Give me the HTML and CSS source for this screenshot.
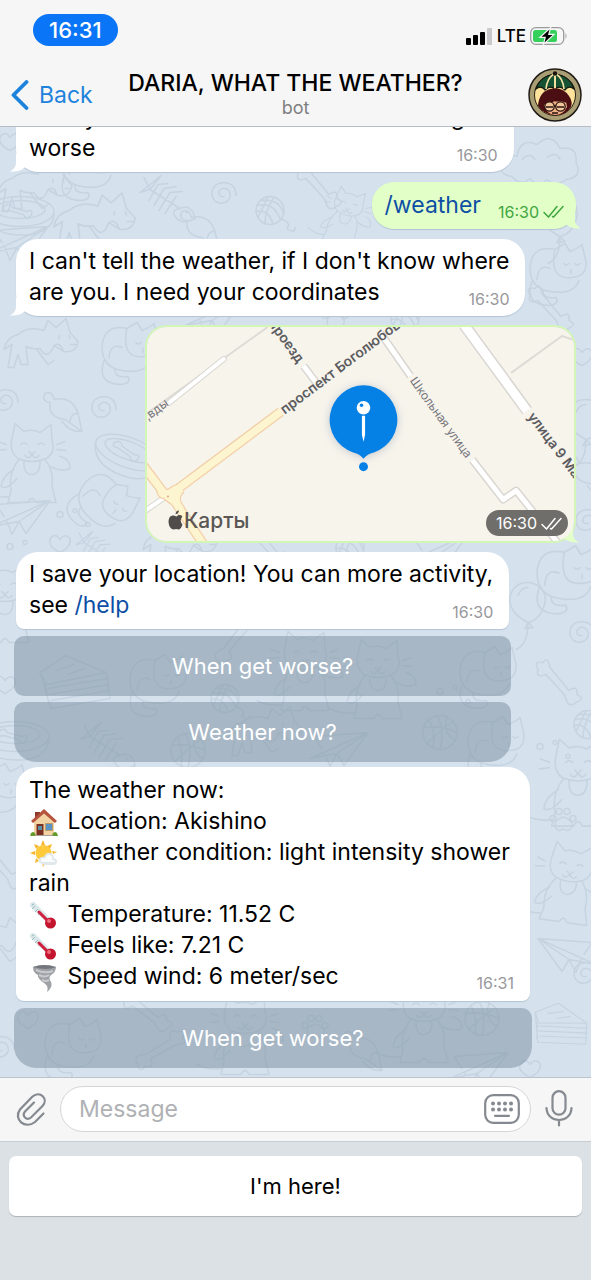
FILE: index.html
```html
<!DOCTYPE html>
<html lang="en">
<head>
<meta charset="utf-8">
<meta name="viewport" content="width=device-width, initial-scale=1">
<title>DARIA, WHAT THE WEATHER?</title>
<link rel="stylesheet" href="styles.css">
</head>
<body>
<svg class="defs" width="0" height="0" aria-hidden="true">
  <symbol id="tail-in" viewBox="0 0 20 18"><path d="M7 0V9C7 13 4 16 1 17.500C7 18 12 17 16 13L20 10V0Z"/></symbol>
  <symbol id="tail-out" viewBox="0 0 20 18"><path d="M13 0V9C13 13 16 16 19 17.500C13 18 8 17 4 13L0 10V0Z"/></symbol>
  <symbol id="checks" viewBox="0 0 21 13"><path d="M1 7.500L5.500 12L14 1.500M9.500 11.500L10.500 12L20 1.500" fill="none" stroke="currentColor" stroke-width="1.500" stroke-linecap="round" stroke-linejoin="round"/></symbol>
  <symbol id="thermometer" viewBox="0 0 28 28">
    <path d="M3 3L16 16" stroke="#dbe7ea" stroke-width="6" stroke-linecap="round"/>
    <path d="M2 7L5 4M5 10L8 7M8 13L11 10M2 3L4 2" stroke="#9bbcbc" stroke-width="1"/>
    <path d="M9 10L19 20" stroke="#cf1f3d" stroke-width="3" stroke-linecap="round"/>
    <circle cx="20.500" cy="21" r="5.500" fill="#c4152f"/><circle cx="19" cy="19" r="2" fill="#ef6b7c"/>
  </symbol>
  <g id="d-cat"><path d="M-20-28L-17-43L-8-35Q0-38 8-34L19-42L20-26Q24-14 14-8Q0-2-14-8Q-23-14-20-28ZM-11-22q3-3 6 0M6-22q3-3 6 0M-3-15L0-12L3-15M0-12q-4 6-7 1M0-12q4 6 7 1M-26-22l-8-3M-26-17l-9 1M25-22l8-3M25-17l9 1M-13-7Q-24 6-21 24L-24 36H-4Q0 28 4 36H24L20 20Q22 4 13-7M-8-6Q-9 8 0 8Q9 7 8-6M-18 3Q-30 10-31 20Q-25 24-15 12M18 0Q30 6 38 2Q38-8 28-10M-23 30Q-38 32-48 26"/></g>
  <g id="d-curl"><path d="M-5-22Q-28-27-30-4Q-30 17-10 20Q14 24 19 9M-5-22L5-28L10-20Q18-23 22-27L26-10Q27 5 12 6Q-4 8-6-6Q-7-15-5-22M4-8q2 3 5 0M15-8q2 3 5 0M11-2v4M-23 8Q-22-8-10-3M-28 10Q-36 34-10 34Q0 32-4 26Q-18 28-17 18"/></g>
  <g id="d-dog"><path d="M-28-10Q-18-19-2-14L2-24L10-17L20-26L24-12L32-3Q30 9 18 7L8 1Q2 17-6 4Q-15 5-20 2L-18 20H-25L-28 10L-32 23H-38L-34 0L-42 5Q-40-7-28-10ZM13-9v3M23-9l1 3M25 0h5M8 1q6-4 9 5M-10 4L2 20L8 16"/></g>
  <g id="d-fish"><path d="M-26-17L-20-5L-30-2Q-18-11-9-19L-20-5L10 14Q22 9 25 24Q10 32 4 20Q2 15 10 14M-12-10L-21 6M-6-6L-16 11M0-2L-11 16M6 2L-5 19M-12-10L-2-11M-6-6L6-8M0-2L12-3M16 18h2"/></g>
  <g id="d-bone"><path d="M-14-8Q-25-4-22-13Q-27-22-17-20Q-12-27-10-15L9 8Q18 2 17 12Q26 16 16 20Q8 27 5 13Z"/></g>
  <g id="d-yarn"><circle r="14"/><path d="M-12-5Q3-9 10 8M-9-10Q9-12 13 2M-14 1Q-2-2 3 13M-2-14Q-7-3-12 7M4-13Q-5 0-5 13M10 8Q22 12 17 18Q25 24 25 17"/></g>
  <g id="d-ball"><circle r="17"/><path d="M-3-17Q5-3 0 17M-16-5Q0-8 17 0M-13 11Q0-2 13-11M7-15Q2 0 15 8M-11-13Q-4 0-7 15"/></g>
  <g id="d-plane"><path d="M-30 14L28-12L4 21L-3 9ZM28-12L-3 9L-10 22L-15 9M28-12L-26-8L-18 4"/></g>
  <g id="d-paw"><path d="M-7 9Q-10 1-3-1Q0-4 4-1Q12 3 8 9Q4 13 0 9Q-4 13-7 9Z"/><circle cx="-10" cy="-1" r="3"/><circle cx="-4" cy="-8" r="3"/><circle cx="4" cy="-8" r="3"/><circle cx="10" cy="-1" r="3"/></g>
  <g id="d-heart"><path d="M0 9Q-14 2-9-6Q-4-11 0-4Q5-11 10-5Q12 3 0 9Z"/></g>
  <g id="d-swirl"><path d="M2 2Q-4 3-3-3Q1-9 7-4Q11 4 3 8Q-7 11-10 1Q-11-11 2-12Q14-11 14 1"/></g>
  <g id="d-mouse"><path d="M-15-10Q-24-11-20-19Q-12-22-11-13Q7-17 13 1L17 19L0 7Q-17 5-15-10ZM17 19Q5 20-3 9M13 1Q6 0 5 9"/></g>
  <g id="d-bowl"><ellipse rx="34" ry="15"/><ellipse rx="25" ry="9" cy="-2"/><path d="M-34 2Q-28 27 12 23Q34 18 34 2M-16-5Q-10-10-8-4L7 0Q14-3 11 4Q7 9 3 3L-11-1Q-18 1-16-5"/></g>
  <g id="d-cloud"><path d="M-28 12Q-44 10-36-4Q-32-12-23-8Q-20-27-3-20Q12-33 20-16Q38-19 36-2Q43 13 26 15Q16 23 7 15Q-2 24-10 14Q-20 22-28 12ZM-18-5q8-8 13 0M7-7q9-7 13 2"/></g>
  <g id="d-sand"><path d="M-36-8L-10-25L30-8L34 18L-25 28ZM-36-8L-29 4L30-8M-29 8L32-2M-27 14L33 4M-25 20L34 10M-20-10l18-6M-8-6l16-6M-31 4l4 20"/></g>
  <g id="d-balloon"><path d="M0 18Q-20 8-18-8Q-14-23 2-22Q19-18 17-2Q13 15 0 18L-3 24L5 23L0 18Q0 40-12 45M-10-9q3-8 10-8"/></g>
  <g id="d-dots"><circle r="3"/><circle cx="15" cy="-4" r="2"/><circle cx="28" cy="10" r="2"/></g>
</svg>

<div class="app">
  <header class="header">
    <div class="status">
      <span class="clock">16:31</span>
      <span class="signals">
        <svg width="27" height="17" viewBox="0 0 27 17" aria-hidden="true"><rect y="10" width="5" height="7" rx="1"/><rect x="7" y="7" width="5" height="10" rx="1"/><rect x="14" y="4" width="5" height="13" rx="1"/><rect x="21" width="5" height="17" rx="1" fill="#c9c9cb"/></svg>
        <span>LTE</span>
        <svg width="38" height="18" viewBox="0 0 38 18" aria-hidden="true"><rect x=".7" y=".7" width="33" height="16.600" rx="5" fill="none" stroke="#9b9b9e" stroke-width="1.300"/><rect x="3" y="3" width="24" height="12" rx="2.500" fill="#35cf5c"/><path d="M35.500 6q2 3 0 6z" fill="#9b9b9e"/><path d="M19.500 2.500L11.500 9.800H16L14.500 15.500L22.500 8H18Z" stroke="#f6f6f6" stroke-width="2.400" paint-order="stroke"/></svg>
      </span>
    </div>
    <nav class="nav">
      <a class="back" href="#"><svg width="18" height="30" viewBox="0 0 18 30" aria-hidden="true"><path d="M15.500 2L2.500 15L15.500 28" fill="none" stroke="currentColor" stroke-width="3.800" stroke-linecap="round" stroke-linejoin="round"/></svg>Back</a>
      <div class="heading"><h1 class="title">DARIA, WHAT THE WEATHER?</h1><p class="subtitle">bot</p></div>
      <svg class="avatar" viewBox="0 0 54 54" role="img" aria-label="Bot avatar">
        <circle cx="27" cy="27" r="26" fill="#a99d74" stroke="#1f1b14" stroke-width="1.500"/>
        <circle cx="27" cy="27" r="20.500" fill="#ffe39b" stroke="#2a2414" stroke-width="1"/>
        <path d="M8 21Q12 8 27 6Q42 8 46 21Q41 17 37 22Q32 17 27 21Q22 17 17 22Q13 17 8 21Z" fill="#155233" stroke="#14180f" stroke-width="1.200"/>
        <path d="M26 6Q19 10 18 21M28 6Q35 10 36 21" fill="none" stroke="#f3dfa0" stroke-width="1.600"/>
        <path d="M27 7V25" stroke="#f3dfa0" stroke-width="2"/><circle cx="27" cy="5.500" r="2.200" fill="#17130f"/>
        <path d="M10 38Q11 24 22 21Q34 18 41 28Q45 34 43 39Q38 47 27 47.500Q15 46 10 38Z" fill="#4b0e13"/>
        <path d="M16 37Q20 34 23 33Q33 34 38 33L39 39Q35 47 27 47Q18 46 16 37Z" fill="#efb184"/>
        <path d="M16 36Q28 35 30 28Q32 34 40 35L40 30L28 24L17 29Z" fill="#4b0e13"/>
        <g fill="#f5c69c" stroke="#271310" stroke-width="1.300"><circle cx="21.500" cy="38.500" r="4.700"/><circle cx="32.500" cy="38.500" r="4.700"/><path d="M26 38h2M18 39h7M29 39h7M24 45h6"/></g>
      </svg>
    </nav>
  </header>

  <main class="chat">
    <svg class="wallpaper" viewBox="0 0 591 951" preserveAspectRatio="xMidYMid slice" aria-hidden="true">
      <use href="#d-dog" x="40" y="62"/><use href="#d-dog" transform="translate(100 95) scale(1.100)"/><use href="#d-curl" x="92" y="40"/>
      <use href="#d-fish" x="170" y="68"/><use href="#d-swirl" x="222" y="68"/><use href="#d-yarn" x="270" y="84"/>
      <use href="#d-plane" x="20" y="112"/><use href="#d-bone" x="320" y="60"/><use href="#d-cat" transform="translate(345 92) rotate(15) scale(.7)"/>
      <use href="#d-cloud" x="540" y="38"/><use href="#d-mouse" x="202" y="104"/><use href="#d-balloon" x="560" y="92"/>
      <use href="#d-heart" x="10" y="15"/><use href="#d-curl" x="560" y="145"/><use href="#d-bowl" x="20" y="85"/>
      <use href="#d-dog" x="46" y="218"/><use href="#d-curl" x="132" y="224"/><use href="#d-mouse" x="65" y="286"/><use href="#d-swirl" x="102" y="282"/>
      <use href="#d-swirl" x="4" y="275"/><use href="#d-cat" x="32" y="340"/><use href="#d-bowl" transform="translate(128 326) rotate(20)"/>
      <use href="#d-curl" transform="translate(106 378) rotate(40)"/><use href="#d-plane" x="22" y="386"/><use href="#d-dots" x="60" y="388"/>
      <use href="#d-heart" x="60" y="417"/><use href="#d-fish" transform="translate(100 420) scale(.8)"/><use href="#d-dots" x="10" y="420"/>
      <use href="#d-plane" x="215" y="185"/><use href="#d-paw" x="335" y="190"/><use href="#d-yarn" x="405" y="192"/><use href="#d-bone" x="552" y="182"/>
      <use href="#d-heart" x="582" y="230"/><use href="#d-balloon" x="586" y="295"/><use href="#d-mouse" x="590" y="350"/><use href="#d-swirl" x="586" y="395"/>
      <use href="#d-dog" x="185" y="418"/><use href="#d-bone" x="270" y="420"/><use href="#d-yarn" x="350" y="421"/><use href="#d-plane" x="440" y="420"/>
      <use href="#d-curl" transform="translate(570 450) scale(1.100)"/><use href="#d-balloon" x="528" y="478"/><use href="#d-swirl" x="580" y="507"/>
      <use href="#d-cat" x="5" y="480"/><use href="#d-heart" x="5" y="558"/><use href="#d-bowl" x="15" y="610"/>
      <use href="#d-sand" x="76" y="554"/><use href="#d-curl" x="160" y="556"/><use href="#d-bone" transform="translate(235 515) rotate(80)"/>
      <use href="#d-yarn" x="225" y="572"/><use href="#d-fish" x="110" y="615"/><use href="#d-ball" x="188" y="624"/><use href="#d-cat" x="305" y="548"/>
      <use href="#d-cat" x="378" y="556"/><use href="#d-dots" x="440" y="565"/><use href="#d-curl" x="490" y="548"/><use href="#d-bone" x="560" y="556"/>
      <use href="#d-ball" x="440" y="606"/><use href="#d-plane" x="340" y="618"/><use href="#d-dog" x="270" y="606"/><use href="#d-curl" x="498" y="618"/>
      <use href="#d-yarn" x="588" y="598"/><use href="#d-cat" transform="translate(578 660) scale(1.100)"/><use href="#d-paw" x="563" y="693"/>
      <use href="#d-cat" transform="translate(568 760) rotate(8)"/><use href="#d-plane" transform="translate(566 824) scale(-1 1)"/><use href="#d-swirl" x="584" y="848"/>
      <use href="#d-dots" x="540" y="620"/><use href="#d-curl" x="0" y="665"/><use href="#d-bone" x="3" y="740"/><use href="#d-dog" x="8" y="815"/>
      <use href="#d-sand" transform="translate(562 898) rotate(12) scale(.8)"/><use href="#d-ball" x="482" y="892"/><use href="#d-cat" x="424" y="900"/>
      <use href="#d-heart" x="28" y="893"/><use href="#d-curl" x="75" y="920"/><use href="#d-bone" transform="translate(148 885) rotate(-10)"/>
      <use href="#d-bone" transform="translate(160 925) rotate(100)"/><use href="#d-cat" x="245" y="912"/><use href="#d-swirl" x="0" y="922"/>
      <use href="#d-mouse" x="365" y="925"/><use href="#d-plane" x="480" y="938"/><use href="#d-paw" x="315" y="900"/><use href="#d-heart" x="530" y="942"/>
    </svg>

    <div class="messages">
      <article class="bubble bubble-in">
        <svg class="tail tail-left" aria-hidden="true"><use href="#tail-in"/></svg>
        <p class="text">I'll say when the weather around there gets<br>worse</p>
        <time class="time">16:30</time>
      </article>

      <article class="bubble bubble-out">
        <svg class="tail tail-right" aria-hidden="true"><use href="#tail-out"/></svg>
        <p class="text"><a class="command" href="#">/weather</a></p>
        <span class="time time-sent"><time>16:30</time><svg class="checks" aria-label="Read"><use href="#checks"/></svg></span>
      </article>

      <article class="bubble bubble-in">
        <svg class="tail tail-left" aria-hidden="true"><use href="#tail-in"/></svg>
        <p class="text">I can't tell the weather, if I don't know where<br>are you. I need your coordinates</p>
        <time class="time">16:30</time>
      </article>

      <article class="location">
        <svg class="tail tail-right" aria-hidden="true"><use href="#tail-out"/></svg>
        <svg class="map" viewBox="0 0 428 215" role="img" aria-label="Map with the shared location">
          <rect width="428" height="215" fill="#f7f4ec"/>
          <g fill="none" stroke-linejoin="round">
            <path d="M121 0L-5 90M365 46L416 9L428 13" stroke="#dedbd6" stroke-width="2"/>
            <g stroke="#d9d6d2"><path d="M22 76L77 32" stroke-width="6" stroke-linecap="round"/><path d="M157 39L169 55M234 6L264 49M326 133L357 173L370 164L414 219" stroke-width="8"/><path d="M318 -2L381 84" stroke-width="12"/><path d="M-3 185L22 168" stroke-width="6"/></g>
            <g stroke="#fff"><path d="M22 76L77 32" stroke-width="4" stroke-linecap="round"/><path d="M157 39L169 55M234 6L264 49M326 133L357 173L370 164L414 219" stroke-width="5"/><path d="M318 -2L381 84" stroke-width="9"/><path d="M-3 185L22 168" stroke-width="4"/></g>
            <path d="M134 85L26 166M-6 136L15 164Q20 170 28 175L60 223M30 162Q14 174 14 162M34 162Q24 172 34 183" stroke="#f2cfa8" stroke-width="10"/>
            <path d="M134 85L26 166M-6 136L15 164Q20 170 28 175L60 223M30 162Q14 174 14 162M34 162Q24 172 34 183" stroke="#fdf5cf" stroke-width="7.500"/>
            <circle cx="21" cy="170" r="1" fill="#e0a878"/>
          </g>
          <g class="map-main">
            <text transform="translate(138 88) rotate(-37)">проспект Боголюбов</text>
            <text transform="translate(120 -5) rotate(54)">Проезд</text>
            <text transform="translate(381 90) rotate(53)">улица 9 Мая</text>
          </g>
          <g class="map-minor">
            <text transform="translate(263 54) rotate(54)">Школьная улица</text>
            <text transform="translate(1 94) rotate(-37)">,вды</text>
          </g>
          <path d="M29.500 190Q33 187 35.500 190Q32 194 35.500 198Q34 203 31.500 203Q29 202 27 203Q22 203 21.500 195Q22 188 27 189ZM28.500 188Q29 184 32 184Q32 187 28.500 188Z" fill="#4f4c49"/>
          <text class="map-brand" x="37" y="202">Карты</text>
          <g class="pin">
            <path d="M217 58.500a34.500 34.500 0 0 1 11 67Q221 127 217 132Q213 127 206 125.500a34.500 34.500 0 0 1 11-67Z" fill="#0580e5"/>
          </g>
          <circle cx="217" cy="140" r="4.500" fill="#0580e5"/>
          <circle cx="217" cy="81" r="6.800" fill="#fff"/><circle cx="215" cy="78.500" r="1.800" fill="#0580e5"/>
          <path d="M215.400 89H218.600V108L217 115L215.400 108Z" fill="#fff"/>
        </svg>
        <span class="time time-pill"><time>16:30</time><svg class="checks" aria-label="Read"><use href="#checks"/></svg></span>
      </article>

      <section class="group">
        <article class="bubble bubble-in joined">
          <p class="text">I save your location! You can more activity,<br>see <a class="command" href="#">/help</a></p>
          <time class="time">16:30</time>
        </article>
        <div class="actions">
          <button class="action" type="button">When get worse?</button>
          <button class="action" type="button">Weather now?</button>
        </div>
      </section>

      <section class="group">
        <article class="bubble bubble-in joined report">
          <p class="text">The weather now:<br>
            <svg class="emoji" viewBox="0 0 28 28" role="img" aria-label="House"><path d="M5 3h5v6H5z" fill="#8c3a2c"/><path d="M4 12L14 3L24 12V26H4Z" fill="#f3d3a4"/><path d="M14 0L27 12L25 14L14 4.500L3 14L1 12Z" fill="#b5533c"/><path d="M6.500 15h7v11h-7z" fill="#7a3023"/><path d="M8 17h4v4H8z" fill="#5b8fa8"/><path d="M15.500 14.500h7v7h-7z" fill="#5b93c4" stroke="#bf9a69"/><path d="M0 26q2-5 5-2l1 3H1zM22 26q2-5 5-2l1 3h-6z" fill="#639b2d"/><path d="M5 26h18v1H5z" fill="#a9a49a"/></svg> Location: Akishino<br>
            <svg class="emoji" viewBox="0 0 28 28" role="img" aria-label="Sun behind small cloud"><path d="M13 0l2 5h-4zM22 4l-2 5-3-3zM4 4l5 2-3 3zM0 13l5-2v4zM27 12l-5-1 1 3zM5 23l1-5 3 3zM13 27l-1-5h4z" fill="#f5b52e"/><circle cx="13.500" cy="13" r="8" fill="#ffc93c"/><path d="M12 24Q8 23 9 19Q11 16 14 17Q16 12 20 13Q24 14 24 18Q28 19 27 23Q26 25 23 25H14Z" fill="#e0e8ec"/><path d="M12 22Q10 21 11 19Q13 17 15 19Q17 14 20 15Q23 16 22 20Q26 20 25 22Z" fill="#fafcfc"/></svg> Weather condition: light intensity shower<br>rain<br>
            <svg class="emoji" role="img" aria-label="Thermometer"><use href="#thermometer"/></svg> Temperature: 11.52 C<br>
            <svg class="emoji" role="img" aria-label="Thermometer"><use href="#thermometer"/></svg> Feels like: 7.21 C<br>
            <svg class="emoji" viewBox="0 0 28 28" role="img" aria-label="Tornado"><path d="M3 3Q14-1 26 3Q26 8 21 11Q18 14 21 18Q23 23 17 28Q19 22 14 19Q7 14 8 11Q3 9 3 3Z" fill="#9ea1a6"/><path d="M3 3Q14-1 26 3Q17 7 3 3Z" fill="#74777d"/><path d="M6 6Q15 10 23 7M9 11Q15 14 19 11M12 16Q16 18 19 16" stroke="#c8cacd" stroke-width="2" fill="none"/></svg> Speed wind: 6 meter/sec</p>
          <time class="time">16:31</time>
        </article>
        <div class="actions">
          <button class="action" type="button">When get worse?</button>
        </div>
      </section>
    </div>
  </main>

  <form class="composer">
    <button class="icon-button" type="button" aria-label="Attach"><svg width="30" height="34" viewBox="0 0 30 34" aria-hidden="true"><path d="M27.500 21.500L19 30C9 38-3 27 4 17.500L16.500 4.500C24-2 33 7 26.500 14L15 25.500C10.500 29 5.500 24 9 19.500L18 10.500" fill="none" stroke="currentColor" stroke-width="2.200" stroke-linecap="round"/></svg></button>
    <div class="field">
      <input class="field-input" type="text" placeholder="Message" aria-label="Message">
      <button class="icon-button" type="button" aria-label="Bot keyboard"><svg width="36" height="30" viewBox="0 0 36 30" aria-hidden="true"><rect x="1.200" y="1.200" width="33.600" height="27.600" rx="8" fill="none" stroke="currentColor" stroke-width="2.200"/><path d="M9 9.500h.01M15 9.500h.01M21 9.500h.01M27 9.500h.01M9 15.500h.01M15 15.500h.01M21 15.500h.01M27 15.500h.01" stroke="currentColor" stroke-width="4" stroke-linecap="round"/><path d="M11 21.800H25" stroke="currentColor" stroke-width="2.200" stroke-linecap="round"/></svg></button>
    </div>
    <button class="icon-button" type="button" aria-label="Record voice message"><svg width="28" height="37" viewBox="0 0 28 37" aria-hidden="true"><g fill="none" stroke="currentColor" stroke-width="2.200" stroke-linecap="round"><rect x="7.500" y="1.200" width="13" height="23.500" rx="6.500"/><path d="M1.500 18C2 34 26 34 26.500 18M14 30V35.500"/></g></svg></button>
  </form>

  <footer class="keyboard"><button class="key" type="button">I'm here!</button></footer>
</div>
</body>
</html>
```
FILE: styles.css
```css
* { box-sizing: border-box; }
body { margin: 0; font-family: Inter, "Liberation Sans", sans-serif; color: #000; }
h1, p { margin: 0; font-weight: 400; }
a { color: inherit; text-decoration: none; }
button, input { font: inherit; color: inherit; border: 0; padding: 0; margin: 0; background: none; }
svg { flex: none; }
.defs { position: absolute; }

.app { display: flex; flex-direction: column; height: 100vh; font-size: 23px; }

.header { background: #f6f6f6; border-bottom: 1px solid #b7bcc2; }
.status { display: flex; align-items: center; justify-content: space-between; height: 60px; padding: 0 23px 0 33px; }
.clock { padding: 0 16px; border-radius: 16px; background: #0a75f6; color: #fff; font-size: 22px; font-weight: 500; line-height: 32px; }
.signals { display: flex; align-items: center; gap: 4px; padding-top: 12px; font-size: 17px; font-weight: 500; }
.nav { display: grid; grid-template-columns: 1fr auto 1fr; align-items: center; height: 66px; padding: 4px 9px 0; }
.back { display: flex; align-items: center; gap: 10px; padding-left: 2px; color: #1d82dc; }
.heading { text-align: center; }
.title { font-size: 23px; font-weight: 500; line-height: 26px; }
.subtitle { color: #7f7f82; font-size: 18px; line-height: 24px; }
.avatar { width: 54px; height: 54px; justify-self: end; }

.chat { position: relative; flex: 1; min-height: 0; overflow: hidden; display: flex; flex-direction: column; justify-content: flex-end; background: #d5e2ee; }
.wallpaper { position: absolute; inset: 0; width: 100%; height: 100%; fill: none; stroke: #c6d3e0; stroke-width: 1.5; stroke-linejoin: round; stroke-linecap: round; }
.messages { position: relative; display: flex; flex-direction: column; align-items: flex-start; gap: 10px; padding: 0 15px 9px 16px; }

.bubble { position: relative; display: grid; width: fit-content; padding: 7px 16px 8px 13px; border-radius: 22px; line-height: 31px; box-shadow: 0 1px 1px #b4c4d4; }
.bubble > .text, .bubble > .time { grid-area: 1 / 1; }
.bubble-in { background: #fff; }
.bubble-out { align-self: flex-end; grid-template-columns: auto auto; column-gap: 17px; padding: 8px 12px 8px 13px; background: #e1ffc7; }
.bubble-out > .time { grid-area: 1 / 2; }
.joined { border-radius: 22px 22px 8px 8px; }
.text { position: relative; }
.command { color: #0e4fa5; }
.time { place-self: end; margin-bottom: -3px; color: #98989c; font-size: 16px; line-height: 24px; }
.time-sent, .time-pill { display: flex; align-items: center; gap: 4px; }
.bubble-out .time-sent { color: #3fa63f; }
.checks { width: 21px; height: 13px; }

.tail { position: absolute; bottom: 0; width: 20px; height: 18px; }
.tail-left { left: -7px; fill: #fff; }
.tail-right { right: -6px; fill: #e1ffc7; }

.location { position: relative; align-self: flex-end; width: 431px; max-width: 100%; margin: -1px 0; border: 2px solid #d3f5b6; border-radius: 22px; }
.location .tail { bottom: -2px; }
.map { position: relative; display: block; width: 100%; border-radius: 20px; }
.map-main { font-size: 14px; font-weight: 600; fill: #5c5c60; }
.map-minor { font-size: 12px; fill: #77777c; }
.map-brand { font-size: 21px; font-weight: 500; fill: #5a5754; }
.pin { filter: drop-shadow(0 1px 4px #8fa0b480); }
.location .time-pill { position: absolute; right: 6px; bottom: 5px; margin: 0; padding: 1px 6px 1px 10px; border-radius: 13px; background: #706e6b; color: #fff; }

.group { width: fit-content; }
.group + .group { margin-top: -5px; }
.group .bubble { width: 100%; }
.actions { display: grid; gap: 6px; margin: 7px -2px 0; }
.action { height: 60px; border-radius: 10px; background: #8396a68f; color: #fff; font-size: 22px; }
.action:last-child { border-radius: 10px 10px 22px 22px; }
.bubble.report { padding: 8px 20px 9px 13px; }
.report .time { margin-right: -4px; }
.emoji { display: inline-block; width: 28px; height: 28px; vertical-align: -4px; margin: -4px 3px -4px 1px; }

.composer { display: flex; align-items: center; gap: 14px; height: 64px; padding: 0 18px 2px 16px; background: #f6f6f6; border-top: 1px solid #bcc3ca; }
.icon-button { display: flex; color: #858a90; }
.field { flex: 1; min-width: 0; display: flex; align-items: center; height: 46px; padding: 0 10px 0 18px; border: 1px solid #d3d6d9; border-radius: 23px; background: #fff; }
.field-input { flex: 1; min-width: 0; outline: 0; }
.field-input::placeholder { color: #b0b1b5; opacity: 1; }

.keyboard { height: 139px; padding: 14px 9px; background: #dce1e5; border-top: 1px solid #c8cdd2; }
.key { width: 100%; height: 60px; border-radius: 7px; background: #fff; box-shadow: 0 1px 1px #adb3b9; font-size: 22px; }
```
